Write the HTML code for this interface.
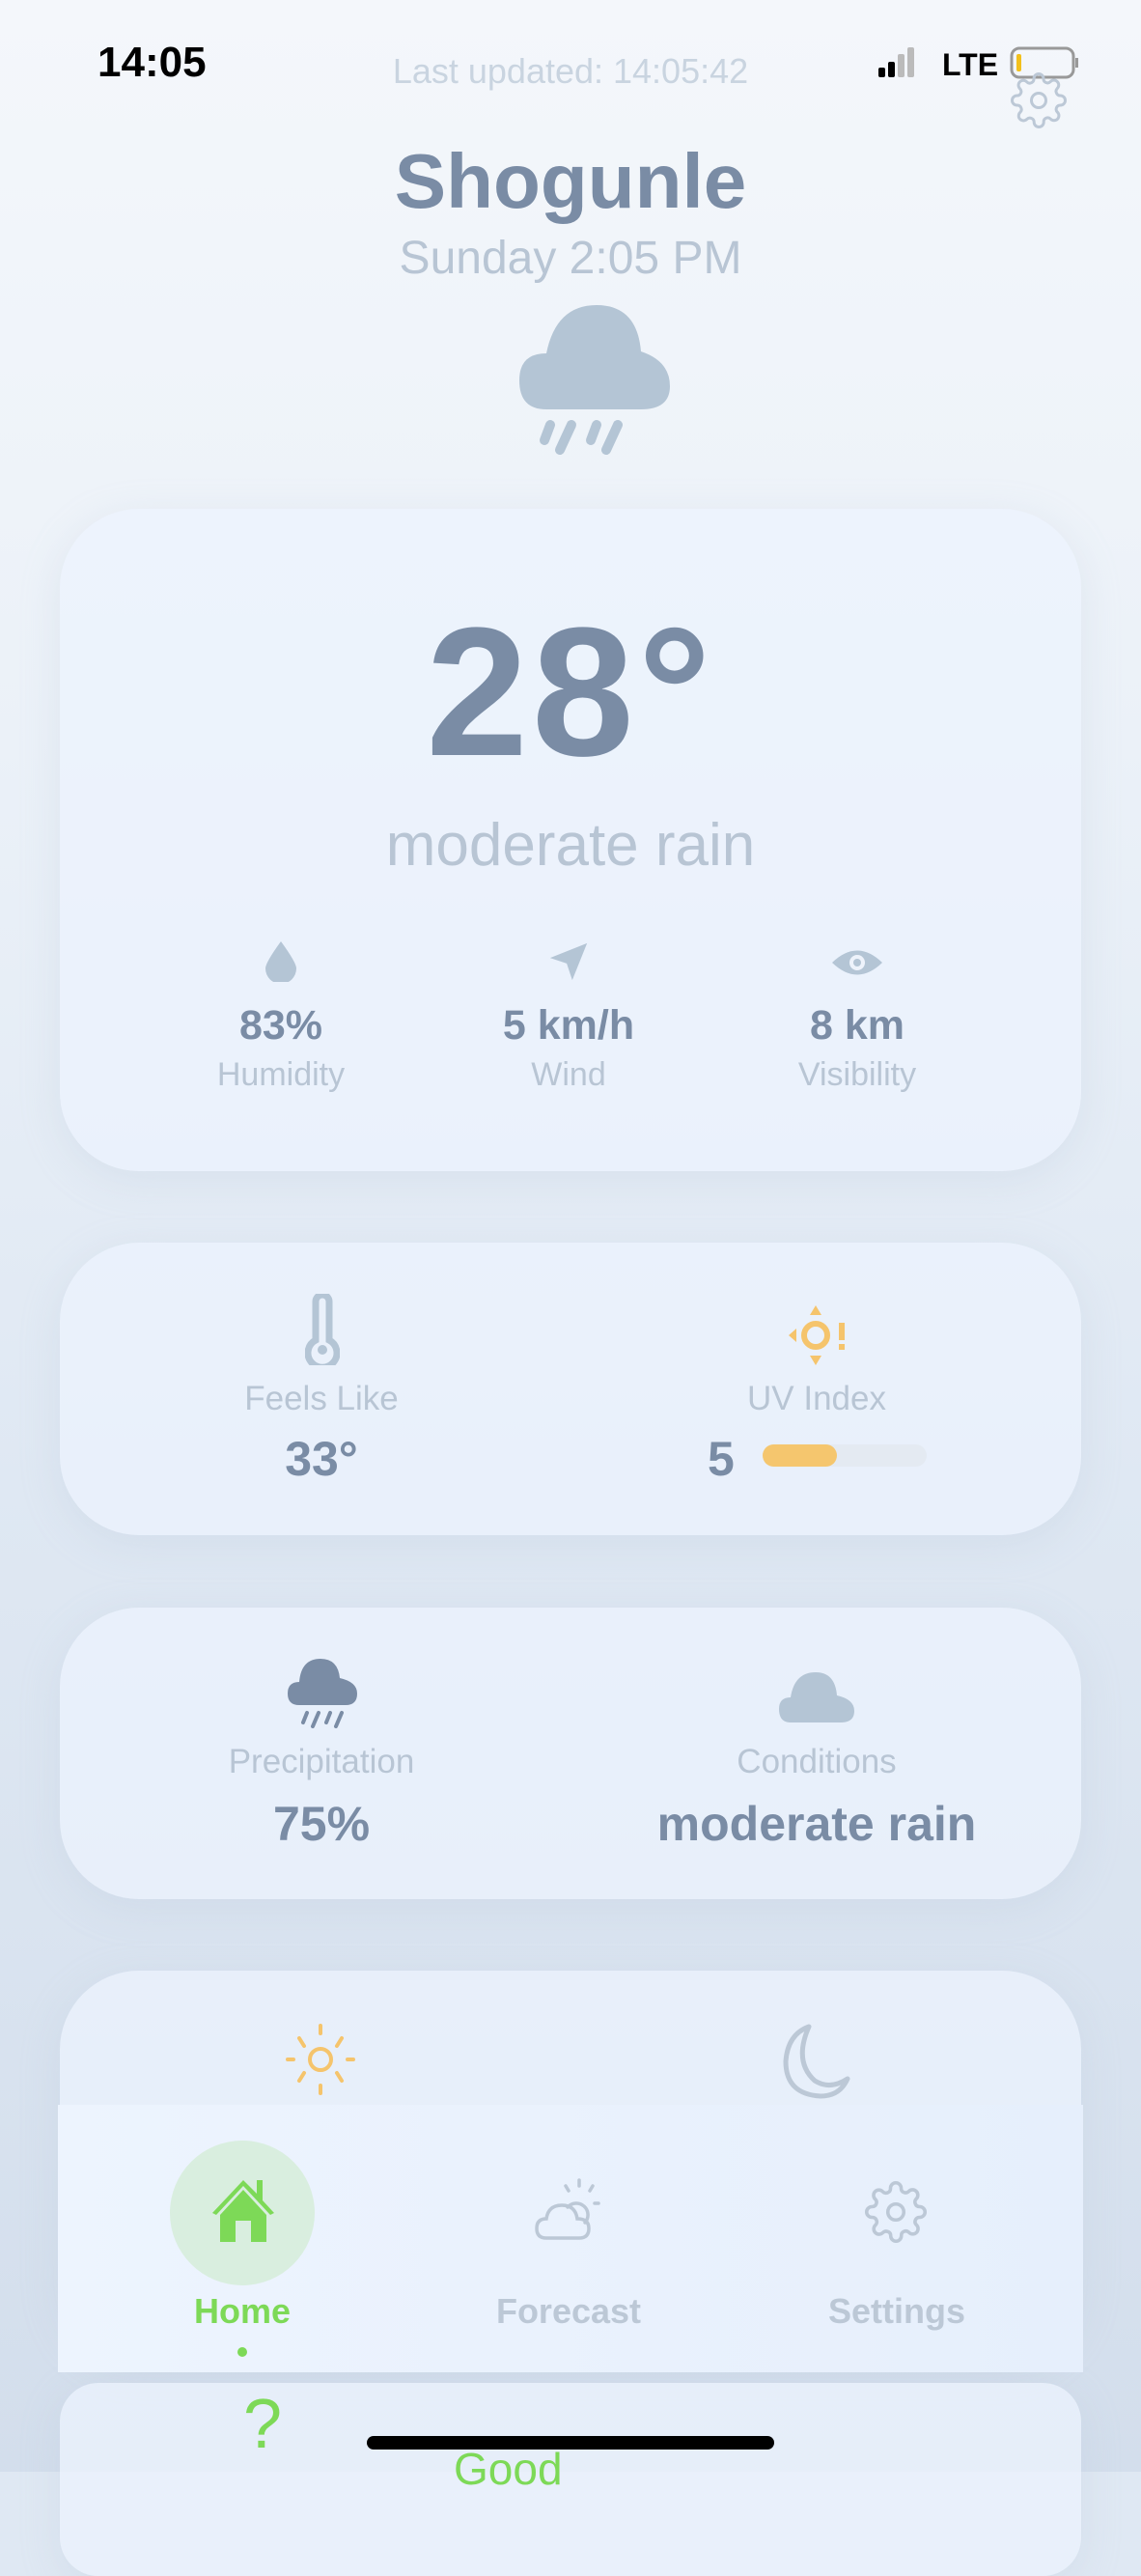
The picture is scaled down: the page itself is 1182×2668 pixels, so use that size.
<!DOCTYPE html>
<html style="width:1182px;height:2560px;background:#dfe8f3"><head><meta charset="utf-8"><style>
*{margin:0;padding:0;box-sizing:border-box}
body{width:1182px;height:2560px;overflow:hidden;position:relative;font-family:"Liberation Sans",sans-serif;background:linear-gradient(180deg,#f4f7fb 0%,#ebf1f8 30%,#dfe8f3 60%,#d3deec 100%)}
.a{position:absolute}
.c{text-align:center}
.card{position:absolute;left:62px;width:1058px;border-radius:82px;background:rgba(236,243,253,0.75);box-shadow:0 10px 40px rgba(180,195,215,0.25)}
.dk{color:#7a8ca5;font-weight:bold}
.lt{color:#b8c5d4}
</style></head><body>
<div class="a" style="left:101px;top:40px;font-size:44px;font-weight:bold;color:#000">14:05</div>
<div class="a c lt" style="left:0;width:1182px;top:53px;font-size:36px;color:#c9d4e0">Last updated: 14:05:42</div>
<svg class="a" style="left:908px;top:48px" width="210" height="34" viewBox="0 0 210 34">
<rect x="2" y="22" width="7" height="10" rx="2" fill="#000"/><rect x="12" y="16" width="7" height="16" rx="2" fill="#000"/><rect x="22" y="8" width="7" height="24" rx="2" fill="#bbb"/><rect x="32" y="1" width="7" height="31" rx="2" fill="#bbb"/>
<text x="68" y="30" font-family="Liberation Sans" font-weight="bold" font-size="32" fill="#000">LTE</text>
<rect x="140" y="2" width="64" height="30" rx="8" fill="none" stroke="#999" stroke-width="3"/><rect x="145" y="8" width="5" height="18" rx="2" fill="#f2c01c"/><rect x="206" y="12" width="3" height="10" fill="#999"/></svg>
<svg class="a" style="left:1046px;top:74px" width="60" height="60" viewBox="0 0 24 24" fill="none" stroke="#bcc8d6" stroke-width="1.2"><circle cx="12" cy="12" r="3"/><path d="M19.4 15a1.65 1.65 0 0 0 .33 1.82l.06.06a2 2 0 1 1-2.83 2.83l-.06-.06a1.65 1.65 0 0 0-1.82-.33 1.65 1.65 0 0 0-1 1.51V21a2 2 0 1 1-4 0v-.09A1.650 1.65 0 0 0 9 19.4a1.65 1.65 0 0 0-1.82.33l-.06.06a2 2 0 1 1-2.83-2.83l.06-.06A1.65 1.65 0 0 0 4.68 15a1.65 1.65 0 0 0-1.51-1H3a2 2 0 1 1 0-4h.09A1.65 1.65 0 0 0 4.6 9a1.65 1.65 0 0 0-.33-1.82l-.06-.06a2 2 0 1 1 2.83-2.83l.06.06A1.65 1.65 0 0 0 9 4.68 1.65 1.65 0 0 0 10 3.17V3a2 2 0 1 1 4 0v.09a1.65 1.65 0 0 0 1 1.51 1.65 1.65 0 0 0 1.82-.33l.06-.06a2 2 0 1 1 2.83 2.83l-.06.06A1.65 1.65 0 0 0 19.4 9a1.65 1.65 0 0 0 1.51 1H21a2 2 0 1 1 0 4h-.09a1.65 1.65 0 0 0-1.51 1z"/></svg>
<div class="a c dk" style="left:0;width:1182px;top:142px;font-size:80px">Shogunle</div>
<div class="a c lt" style="left:0;width:1182px;top:240px;font-size:48px">Sunday 2:05 PM</div>
<svg class="a" style="left:536px;top:314px" width="160" height="165" viewBox="0 0 160 165">
<path d="M30 110 Q2 110 2 80 Q2 52 30 52 Q40 2 82 2 Q124 2 128 50 Q158 60 158 86 Q158 110 128 110 Z" fill="#b4c5d5"/>
<g stroke="#b4c5d5" stroke-width="10" stroke-linecap="round"><line x1="34" y1="126" x2="28" y2="142"/><line x1="56" y1="126" x2="44" y2="152"/><line x1="82" y1="126" x2="76" y2="142"/><line x1="104" y1="126" x2="92" y2="152"/></g></svg>

<div class="card" style="top:527px;height:686px"></div>
<div class="a c dk" style="left:0;width:1182px;top:622px;font-size:190px;line-height:1;letter-spacing:4px">28°</div>
<div class="a c lt" style="left:0;width:1182px;top:840px;font-size:62px">moderate rain</div>
<svg class="a" style="left:273px;top:973px" width="36" height="44" viewBox="0 0 36 44"><path d="M18 2 Q34 24 34 30 A16 16 0 0 1 2 30 Q2 24 18 2Z" fill="#b4c5d5"/></svg>
<svg class="a" style="left:566px;top:973px" width="46" height="46" viewBox="0 0 24 24"><path d="M22 2 L2 10 L11 13 L14 22 Z" fill="#b4c5d5"/></svg>
<svg class="a" style="left:860px;top:980px" width="56" height="34" viewBox="0 0 56 34"><path d="M2 17 Q28 -8 54 17 Q28 42 2 17Z" fill="#b4c5d5"/><circle cx="28" cy="17" r="8" fill="#eef3fb"/><circle cx="28" cy="17" r="4" fill="#b4c5d5"/></svg>
<div class="a c dk" style="left:191px;width:200px;top:1038px;font-size:43px">83%</div>
<div class="a c dk" style="left:439px;width:300px;top:1038px;font-size:43px">5 km/h</div>
<div class="a c dk" style="left:738px;width:300px;top:1038px;font-size:43px">8 km</div>
<div class="a c lt" style="left:141px;width:300px;top:1094px;font-size:34px">Humidity</div>
<div class="a c lt" style="left:439px;width:300px;top:1094px;font-size:34px">Wind</div>
<div class="a c lt" style="left:738px;width:300px;top:1094px;font-size:34px">Visibility</div>

<div class="card" style="top:1287px;height:303px"></div>
<svg class="a" style="left:316px;top:1340px" width="36" height="74" viewBox="0 0 36 74"><path d="M11 8 A7 7 0 0 1 25 8 V48 A15 15 0 1 1 11 48Z" fill="none" stroke="#b4c5d5" stroke-width="7"/><circle cx="18" cy="58" r="5" fill="#b4c5d5"/></svg>
<svg class="a" style="left:815px;top:1350px" width="66" height="66" viewBox="0 0 66 66"><circle cx="30" cy="33" r="12" fill="none" stroke="#f5c46c" stroke-width="6"/><path d="M30 2 L36 12 H24Z M30 64 L36 54 H24Z M2 33 L10 26 V40Z" fill="#f5c46c"/><rect x="54" y="20" width="6" height="18" fill="#f5c46c"/><rect x="54" y="42" width="6" height="6" fill="#f5c46c"/></svg>
<div class="a c lt" style="left:183px;width:300px;top:1429px;font-size:35px">Feels Like</div>
<div class="a c lt" style="left:696px;width:300px;top:1429px;font-size:35px">UV Index</div>
<div class="a c dk" style="left:233px;width:200px;top:1482px;font-size:50px">33°</div>
<div class="a dk" style="left:733px;top:1482px;font-size:50px">5</div>
<div class="a" style="left:790px;top:1496px;width:170px;height:23px;border-radius:12px;background:#e4eaf2"></div>
<div class="a" style="left:790px;top:1496px;width:77px;height:23px;border-radius:12px;background:#f5c66e"></div>

<div class="card" style="top:1665px;height:302px"></div>
<svg class="a" style="left:296px;top:1716px" width="76" height="74" viewBox="0 0 76 74"><path d="M14 50 Q2 50 2 38 Q2 26 14 26 Q16 2 36 2 Q54 2 56 22 Q74 26 74 38 Q74 50 62 50Z" fill="#7a8ca5"/><g stroke="#7a8ca5" stroke-width="4" stroke-linecap="round"><line x1="22" y1="58" x2="18" y2="68"/><line x1="34" y1="58" x2="28" y2="72"/><line x1="46" y1="58" x2="42" y2="68"/><line x1="58" y1="58" x2="52" y2="72"/></g></svg>
<svg class="a" style="left:805px;top:1730px" width="82" height="56" viewBox="0 0 82 56"><path d="M14 54 Q2 54 2 40 Q2 28 14 28 Q18 2 40 2 Q60 2 62 26 Q80 30 80 42 Q80 54 66 54Z" fill="#b4c5d5"/></svg>
<div class="a c lt" style="left:183px;width:300px;top:1805px;font-size:35px">Precipitation</div>
<div class="a c lt" style="left:696px;width:300px;top:1805px;font-size:35px">Conditions</div>
<div class="a c dk" style="left:183px;width:300px;top:1860px;font-size:50px">75%</div>
<div class="a c dk" style="left:596px;width:500px;top:1860px;font-size:50px">moderate rain</div>

<div class="card" style="top:2041px;height:400px"></div>
<svg class="a" style="left:296px;top:2095px" width="72" height="76" viewBox="0 0 72 76" stroke="#f5c46c" stroke-width="4" stroke-linecap="round" fill="none"><circle cx="36" cy="38" r="11"/><line x1="36" y1="3" x2="36" y2="11"/><line x1="36" y1="65" x2="36" y2="73"/><line x1="2" y1="38" x2="8" y2="38"/><line x1="64" y1="38" x2="70" y2="38"/><line x1="14" y1="16" x2="19" y2="24"/><line x1="58" y1="16" x2="53" y2="24"/><line x1="14" y1="60" x2="19" y2="52"/><line x1="58" y1="60" x2="53" y2="52"/></svg>
<svg class="a" style="left:808px;top:2095px" width="74" height="80" viewBox="0 0 74 80"><path d="M30 4 Q14 40 36 60 Q52 70 70 58 Q62 76 42 76 Q6 74 6 40 Q8 12 30 4Z" fill="none" stroke="#bcc8d6" stroke-width="5" stroke-linejoin="round"/></svg>
<div class="card" style="top:2468px;height:200px;border-radius:40px"></div>
<div class="a" style="left:252px;top:2470px;font-size:72px;color:#7dd957">?</div>
<div class="a" style="left:470px;top:2530px;font-size:46px;color:#7dd957">Good</div>

<div class="a" style="left:60px;top:2180px;width:1062px;height:277px;background:linear-gradient(90deg,#edf4fe,#e6effc)"></div>
<div class="a" style="left:176px;top:2217px;width:150px;height:150px;border-radius:50%;background:#d9eedf"></div>
<svg class="a" style="left:216px;top:2254px" width="72" height="72" viewBox="0 0 72 72"><path d="M36 4 L4 38 L8 40 L36 10 L64 40 L68 38 L56 25 V4 H50 V18 Z" fill="#7dd957"/><path d="M12 40 L36 14 L60 40 V68 H44 V46 H28 V68 H12Z" fill="#7dd957"/></svg>
<svg class="a" style="left:552px;top:2254px" width="72" height="72" viewBox="0 0 72 72" fill="none" stroke="#bcc8d6" stroke-width="3.5" stroke-linecap="round"><path d="M14 64 Q4 64 4 54 Q4 44 14 44 Q16 30 30 30 Q44 30 46 44 Q58 44 58 54 Q58 64 48 64Z"/><path d="M36 32 A12 12 0 1 1 54 48"/><line x1="48" y1="4" x2="48" y2="10"/><line x1="34" y1="10" x2="37" y2="15"/><line x1="62" y1="10" x2="59" y2="15"/><line x1="68" y1="28" x2="64" y2="28"/></svg>
<svg class="a" style="left:895px;top:2258px" width="66" height="66" viewBox="0 0 24 24" fill="none" stroke="#bcc8d6" stroke-width="1.3"><circle cx="12" cy="12" r="3"/><path d="M19.4 15a1.65 1.65 0 0 0 .33 1.82l.06.06a2 2 0 1 1-2.83 2.83l-.06-.06a1.65 1.65 0 0 0-1.82-.33 1.65 1.65 0 0 0-1 1.51V21a2 2 0 1 1-4 0v-.09A1.65 1.65 0 0 0 9 19.4a1.65 1.65 0 0 0-1.82.33l-.06.06a2 2 0 1 1-2.83-2.83l.06-.06A1.65 1.65 0 0 0 4.68 15a1.65 1.65 0 0 0-1.51-1H3a2 2 0 1 1 0-4h.09A1.65 1.65 0 0 0 4.6 9a1.65 1.65 0 0 0-.33-1.82l-.06-.06a2 2 0 1 1 2.83-2.83l.06.06A1.65 1.65 0 0 0 9 4.68 1.65 1.65 0 0 0 10 3.17V3a2 2 0 1 1 4 0v.09a1.65 1.65 0 0 0 1 1.51 1.65 1.65 0 0 0 1.82-.33l.06-.06a2 2 0 1 1 2.83 2.83l-.06.06A1.65 1.65 0 0 0 19.4 9a1.65 1.65 0 0 0 1.51 1H21a2 2 0 1 1 0 4h-.09a1.65 1.65 0 0 0-1.51 1z"/></svg>
<div class="a c" style="left:151px;width:200px;top:2373px;font-size:36px;font-weight:bold;color:#7dd957">Home</div>
<div class="a c" style="left:489px;width:200px;top:2373px;font-size:36px;font-weight:bold;color:#bcc8d6">Forecast</div>
<div class="a c" style="left:829px;width:200px;top:2373px;font-size:36px;font-weight:bold;color:#bcc8d6">Settings</div>
<div class="a" style="left:246px;top:2431px;width:10px;height:10px;border-radius:50%;background:#7dd957"></div>
<div class="a" style="left:380px;top:2523px;width:422px;height:14px;border-radius:7px;background:#000"></div>
</body></html>
